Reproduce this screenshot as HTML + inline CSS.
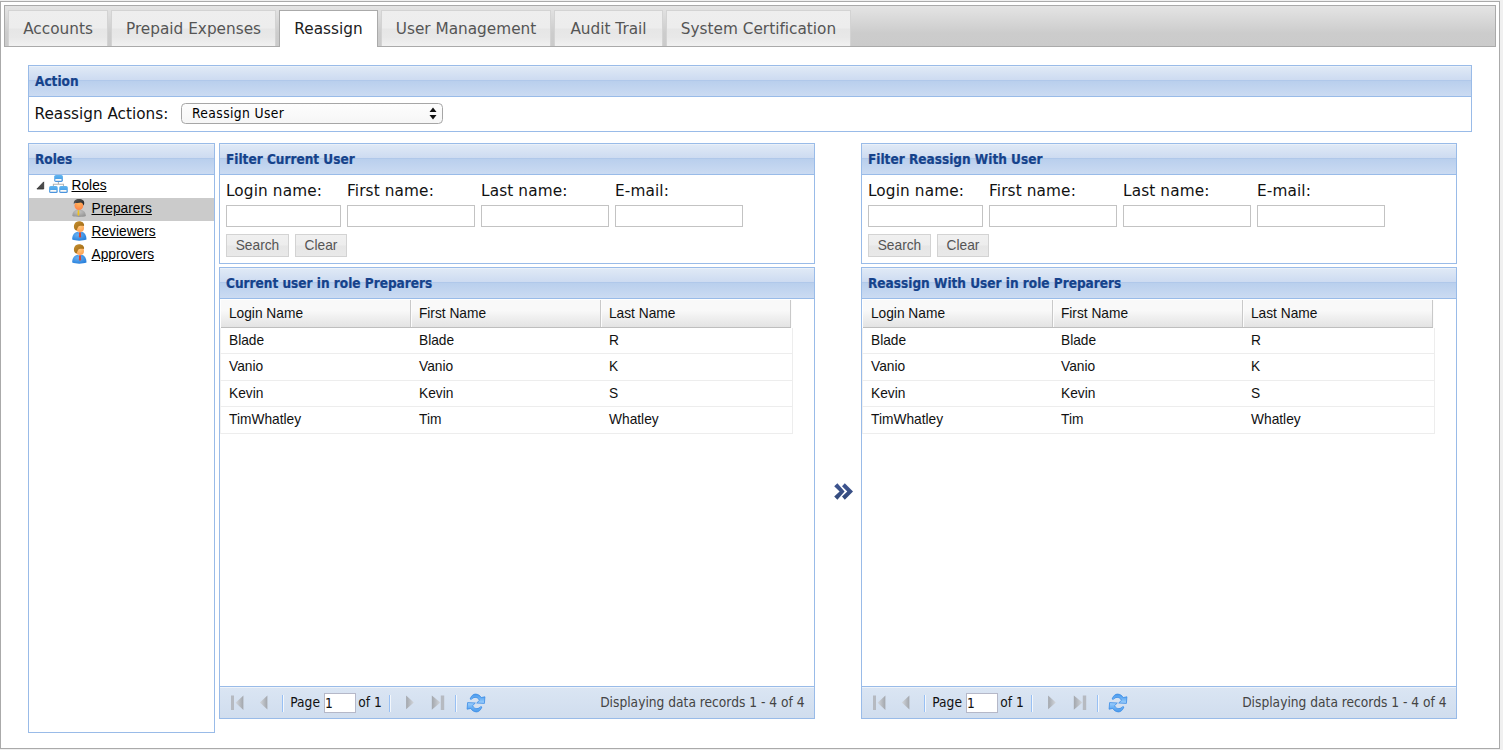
<!DOCTYPE html>
<html><head><meta charset="utf-8"><title>Reassign</title>
<style>
html,body{margin:0;padding:0}
body{font-variant-ligatures:none;width:1503px;height:750px;overflow:hidden;background:#f0f0f0;position:relative;font-family:"DejaVu Sans","Liberation Sans",sans-serif;font-size:15px;color:#222}
div,span,input,button,select{box-sizing:border-box}
input,button,select{margin:0;padding:0;outline:0;border-radius:0;-webkit-appearance:none;appearance:none}
#outer{position:absolute;left:0;top:1px;width:1500px;height:748px;border:1px solid #aaa;background:#fff}
#nav{position:absolute;left:4px;top:5px;width:1492px;height:42px;border:1px solid #aaa;background:linear-gradient(to bottom,#e4e4e4 0,#cccccc 68%,#cbcbcb 100%)}
.tab{position:absolute;top:10px;height:36px;border:1px solid #d3d3d3;border-bottom:0;background:linear-gradient(to bottom,#eeeeee 0,#ededed 47%,#e6e6e6 53%,#e8e8e8 75%,#f1f1f1 100%);color:#555;text-align:center;font-size:15.3px;line-height:18px;padding-top:9px;white-space:nowrap}
.tab.act{height:37px;background:#fff;border-color:#aaa;color:#212121}
.xp{position:absolute;border:1px solid #99bbe8;background:#fff}
.xh{position:absolute;left:0;top:0;right:0;height:31px;border-bottom:1px solid #99bbe8;background:linear-gradient(to bottom,#eaf0f8 0,#eaf0f8 1px,#dfe9f6 1px,#cddbf1 14px,#b0c8ea 14px,#b0c8ea 15px,#b9cfed 15px,#cbdbf2 30px)}
.xt{position:absolute;left:6px;top:6.1px;-webkit-text-stroke:.2px #15428b;font-family:"DejaVu Sans Condensed","DejaVu Sans","Liberation Sans",sans-serif;font-stretch:condensed;font-weight:bold;font-size:13.5px;line-height:18px;color:#15428b;white-space:nowrap}
.lab{position:absolute;top:37px;font-size:15.3px;letter-spacing:.12px;line-height:20px;color:#111;white-space:nowrap}
.inp{position:absolute;top:61px;height:22px;border:1px solid #c3c3c3;background:#fff}
.btn{position:absolute;top:90px;height:23px;border:1px solid #d3d3d3;background:linear-gradient(to bottom,#f0f0f0 0,#ededed 48%,#e6e6e6 52%,#e9e9e9 100%);color:#555;font-family:"Liberation Sans",sans-serif;font-size:13.75px;line-height:21px;text-align:center}
.gh{position:absolute;left:1px;top:32px;width:570px;height:28px;background:linear-gradient(to bottom,#f9f9f9 0,#f9f9f9 38%,#e3e3e3 100%);border-bottom:1px solid #bebebe}
.gc{position:absolute;top:0;width:191px;height:27px;border-right:1px solid #c9c9c9;box-shadow:1px 0 0 #fcfcfc;font-family:"Liberation Sans",sans-serif;font-size:13.75px;line-height:27px;color:#111}
.gc span{position:absolute;left:8.9px;top:.3px}
.row{position:absolute;left:0;width:573px;height:26.25px;border-bottom:1px solid #ededed;border-right:1px solid #ededed;border-left:1px solid #f2f2f2;font-family:"Liberation Sans",sans-serif;font-size:13.75px;line-height:25px;color:#111}
.row span{position:absolute;top:.3px;white-space:nowrap}
.tb{position:absolute;left:0;right:0;bottom:0;height:32px;border-top:1px solid #99bbe8;background:linear-gradient(to bottom,#eef3fa 0,#eef3fa 1px,#dae5f3 1px,#d0ddee 100%)}
.ic{position:absolute}
.sep{position:absolute;top:8px;width:2px;height:17px;border-left:1px solid #98c0f4;border-right:1px solid #f3f7fc}
.tt{position:absolute;top:6px;font-family:"DejaVu Sans Condensed","DejaVu Sans",sans-serif;font-stretch:condensed;font-size:13.65px;line-height:18px;color:#111;white-space:nowrap}
.tt.info{right:9.5px;color:#444}
.pin{position:absolute;left:104px;top:6px;width:32px;height:20px;border:1px solid #b5b8c8;background:#fff;font-family:"DejaVu Sans Condensed","DejaVu Sans",sans-serif;font-stretch:condensed;font-size:13.65px;line-height:17px;color:#111}
.pin span{position:absolute;left:0;top:1.2px}
.node{position:absolute;left:0;width:185px;height:23px;font-family:"Liberation Sans",sans-serif;font-size:13.75px;line-height:22px;color:#000;white-space:nowrap}
.node span{position:absolute;top:0;text-decoration:underline}
.node.sel{background:#cbcbcb}
#sel{position:absolute;left:152px;top:37px;width:262px;height:21px;border:1px solid #a6a6a6;border-radius:4.5px;background:linear-gradient(#fdfdfd,#f6f6f6);font-family:"DejaVu Sans Condensed","DejaVu Sans",sans-serif;font-stretch:condensed;font-size:13.75px;letter-spacing:.38px;line-height:18px;color:#000;padding:0 0 2px 10px;border-radius:4.5px}

</style></head><body>
<div id="outer"></div>
<div id="nav"></div>
<div class="tab" style="left:8px;width:100px"><span>Accounts</span></div>
<div class="tab" style="left:111px;width:165px"><span>Prepaid Expenses</span></div>
<div class="tab act" style="left:279px;width:99px"><span>Reassign</span></div>
<div class="tab" style="left:381px;width:170px"><span>User Management</span></div>
<div class="tab" style="left:554px;width:109px"><span>Audit Trail</span></div>
<div class="tab" style="left:666px;width:185px"><span>System Certification</span></div>

<div class="xp" style="left:28px;top:65px;width:1444px;height:67px">
  <div class="xh"><span class="xt">Action</span></div>
  <div class="lab" style="left:5.5px;top:37.5px;font-size:15.25px;letter-spacing:0">Reassign Actions:</div>
  <select id="sel"><option selected>Reassign User</option><option>Reassign Role</option></select>
  <svg width="8" height="13" viewBox="0 0 8 13" style="position:absolute;left:399.6px;top:41px;pointer-events:none"><path d="M4 0.5 L7.5 5 L0.5 5 Z M0.5 8 L7.5 8 L4 12.5 Z" fill="#111"/></svg>
</div>

<div class="xp" style="left:28px;top:143px;width:187px;height:590px">
  <div class="xh"><span class="xt">Roles</span></div>
  <div class="node" style="top:31px"><svg style="position:absolute;left:7px;top:5.8px" width="9" height="9" viewBox="36 181.5 9 9"><path d="M43.7 182.4 V189.5 H36.9 Z" fill="#4a4a4a" stroke="#2e2e2e" stroke-width=".8" stroke-linejoin="round"/></svg><svg style="position:absolute;left:19px;top:-1px" width="20" height="20" viewBox="48 174 20 20">
<defs><linearGradient id="bx" x1="0" y1="0" x2="0" y2="1"><stop offset="0" stop-color="#62b4ee"/><stop offset=".45" stop-color="#4fa6ea"/><stop offset="1" stop-color="#4b90da"/></linearGradient></defs>
<path d="M58.4 181.5 V184.2 M53.4 186.5 V184.2 H63.5 V186.5" fill="none" stroke="#b3b3b3" stroke-width="1.1"/>
<rect x="54.2" y="175" width="8.7" height="6.9" rx="1.6" fill="url(#bx)"/><rect x="55.3" y="179.1" width="6.2" height="1.7" rx=".4" fill="#fdfaf6"/>
<rect x="49.1" y="186.1" width="8.6" height="7" rx="1.6" fill="url(#bx)"/><rect x="50.2" y="190.1" width="6.2" height="1.7" rx=".4" fill="#fdfaf6"/>
<rect x="59.2" y="186.1" width="8.6" height="7" rx="1.6" fill="url(#bx)"/><rect x="60.3" y="190.1" width="6.2" height="1.7" rx=".4" fill="#fdfaf6"/>
</svg><span style="left:42.5px">Roles</span></div>
  <div class="node sel" style="top:54px"><svg style="position:absolute;left:42px;top:0" width="17" height="21" viewBox="71 198 17 21">
<defs><linearGradient id="hr1" x1="0" y1="0" x2="1" y2="1"><stop offset="0" stop-color="#5e5e5e"/><stop offset="1" stop-color="#1c1c1c"/></linearGradient>
<radialGradient id="bd1" cx=".45" cy=".3" r=".8"><stop offset="0" stop-color="#c4c4c4"/><stop offset="1" stop-color="#8f8f8f"/></radialGradient>
<radialGradient id="fc1" cx=".5" cy=".3" r=".7"><stop offset="0" stop-color="#ffb45a"/><stop offset="1" stop-color="#ff8248"/></radialGradient></defs>
<path d="M72.3 216 C72.4 212.6 73.8 210.6 77 209.6 L78.6 210.6 L80.6 209.6 C84.2 210.4 85.8 212.8 85.9 216 C82.5 217.2 76 217.2 72.3 216 Z" fill="url(#bd1)"/>
<ellipse cx="78.9" cy="205.6" rx="4.4" ry="4.5" fill="url(#fc1)"/>
<path d="M77.7 210.2 L79.2 210.2 L79.4 214.8 L78.4 216 L77.5 214.8 Z" fill="#f0c01c"/>
<path d="M73.9 204.2 C73.2 200.6 76 198.9 79 199 C82.4 199 84.6 200.8 84.2 203.4 C84.1 204.4 83.8 205.2 83.4 205.6 C83.2 204 82.4 203 81 202.6 C79 203.2 76.4 203.2 74.9 202.8 C74.5 203.4 74.2 204 73.9 204.2 Z" fill="url(#hr1)"/>
</svg><span style="left:62.5px">Preparers</span></div>
  <div class="node" style="top:77px"><svg style="position:absolute;left:42px;top:0" width="17" height="21" viewBox="71 198 17 21">
<defs><linearGradient id="hr2" x1="0" y1="0" x2="1" y2="1"><stop offset="0" stop-color="#c69030"/><stop offset="1" stop-color="#996210"/></linearGradient>
<radialGradient id="bd2" cx=".4" cy=".35" r=".8"><stop offset="0" stop-color="#6ab2f2"/><stop offset="1" stop-color="#1d78d8"/></radialGradient>
<radialGradient id="fc2" cx=".45" cy=".3" r=".8"><stop offset="0" stop-color="#ffca7c"/><stop offset="1" stop-color="#ff9a4e"/></radialGradient></defs>
<path d="M72.2 216.6 C72.2 212.6 73.8 209.8 77.4 208.8 L79.8 209.8 L82 208.8 C85 209.8 86.5 212.6 86.5 216.6 C82.5 218 76 218 72.2 216.6 Z" fill="url(#bd2)"/>
<ellipse cx="80" cy="205" rx="4" ry="4.1" fill="url(#fc2)"/>
<path d="M79.1 209.2 L80.9 209.2 L81.1 213.8 L80 215 L78.9 213.8 Z" fill="#d2463a"/>
<path d="M74.8 206.6 C72.6 202.6 74.8 198.2 79 198.2 C82.6 198.2 84.6 200.4 84 203 C82.4 202.6 80.4 202.6 78.6 203.2 C77.6 204.4 77.2 205.6 76.8 207.6 C76 207.4 75.2 207.2 74.8 206.6 Z" fill="url(#hr2)"/>
</svg><span style="left:62.5px">Reviewers</span></div>
  <div class="node" style="top:100px"><svg style="position:absolute;left:42px;top:0" width="17" height="21" viewBox="71 198 17 21">
<defs><linearGradient id="hr3" x1="0" y1="0" x2="1" y2="1"><stop offset="0" stop-color="#c69030"/><stop offset="1" stop-color="#996210"/></linearGradient>
<radialGradient id="bd3" cx=".4" cy=".35" r=".8"><stop offset="0" stop-color="#6ab2f2"/><stop offset="1" stop-color="#1d78d8"/></radialGradient>
<radialGradient id="fc3" cx=".45" cy=".3" r=".8"><stop offset="0" stop-color="#ffca7c"/><stop offset="1" stop-color="#ff9a4e"/></radialGradient></defs>
<path d="M72.2 216.6 C72.2 212.6 73.8 209.8 77.4 208.8 L79.8 209.8 L82 208.8 C85 209.8 86.5 212.6 86.5 216.6 C82.5 218 76 218 72.2 216.6 Z" fill="url(#bd3)"/>
<ellipse cx="80" cy="205" rx="4" ry="4.1" fill="url(#fc3)"/>
<path d="M79.1 209.2 L80.9 209.2 L81.1 213.8 L80 215 L78.9 213.8 Z" fill="#d2463a"/>
<path d="M74.8 206.6 C72.6 202.6 74.8 198.2 79 198.2 C82.6 198.2 84.6 200.4 84 203 C82.4 202.6 80.4 202.6 78.6 203.2 C77.6 204.4 77.2 205.6 76.8 207.6 C76 207.4 75.2 207.2 74.8 206.6 Z" fill="url(#hr3)"/>
</svg><span style="left:62.5px">Approvers</span></div>
</div>

<div class="xp" style="left:219px;top:143px;width:596px;height:121px">
  <div class="xh"><span class="xt">Filter Current User</span></div>
  <div class="lab" style="left:6px">Login name:</div>
  <div class="lab" style="left:127px">First name:</div>
  <div class="lab" style="left:261px">Last name:</div>
  <div class="lab" style="left:395px">E-mail:</div>
  <input class="inp" type="text" style="left:6px;width:115px">
  <input class="inp" type="text" style="left:127px;width:128px">
  <input class="inp" type="text" style="left:261px;width:128px">
  <input class="inp" type="text" style="left:395px;width:128px">
  <button class="btn" type="button" style="left:6px;width:63px">Search</button>
  <button class="btn" type="button" style="left:75px;width:52px">Clear</button>
</div>

<div class="xp" style="left:219px;top:267px;width:596px;height:452px">
  <div class="xh"><span class="xt">Current user in role Preparers</span></div>
  <div class="gh">
    <div class="gc" style="left:-1px"><span>Login Name</span></div>
    <div class="gc" style="left:189px"><span>First Name</span></div>
    <div class="gc" style="left:379px"><span>Last Name</span></div>
  </div>
  <div class="row" style="top:60px;height:26px"><span style="left:8px">Blade</span><span style="left:198px">Blade</span><span style="left:388px">R</span></div>
<div class="row" style="top:86px;height:27px"><span style="left:8px">Vanio</span><span style="left:198px">Vanio</span><span style="left:388px">K</span></div>
<div class="row" style="top:113px;height:26px"><span style="left:8px">Kevin</span><span style="left:198px">Kevin</span><span style="left:388px">S</span></div>
<div class="row" style="top:139px;height:27px"><span style="left:8px">TimWhatley</span><span style="left:198px">Tim</span><span style="left:388px">Whatley</span></div>

  <div class="tb">
    <svg class="ic" style="left:10px;top:8px" width="15" height="16" viewBox="0 0 15 16"><defs><linearGradient id="tg219" x1="0" y1="0" x2="1" y2="0"><stop offset="0" stop-color="#d2d6dc"/><stop offset="1" stop-color="#a2a6ac"/></linearGradient><linearGradient id="tgb219" x1="1" y1="0" x2="0" y2="0"><stop offset="0" stop-color="#d2d6dc"/><stop offset="1" stop-color="#a2a6ac"/></linearGradient></defs><rect x="1" y=".5" width="3" height="14.5" fill="#b6bac1"/><path d="M13.4 .5 L5.6 7.7 L13.4 15 Z" fill="url(#tg219)"/></svg>
    <svg class="ic" style="left:39px;top:8px" width="10" height="16" viewBox="0 0 10 16"><path d="M8.4 .5 L.8 7.6 L8.4 14.6 Z" fill="url(#tg219)"/></svg>
    <div class="sep" style="left:62px"></div>
    <span class="tt" style="left:70.3px">Page</span>
    <input class="pin" type="text" value="1">
    <span class="tt" style="left:138.3px">of 1</span>
    <div class="sep" style="left:169px"></div>
    <svg class="ic" style="left:185px;top:8px" width="10" height="16" viewBox="0 0 10 16"><path d="M1.1 .5 L8.9 7.4 L1.1 14.2 Z" fill="url(#tgb219)"/></svg>
    <svg class="ic" style="left:211px;top:8px" width="15" height="16" viewBox="0 0 15 16"><path d="M.8 .5 L9.4 7.6 L.8 14.8 Z" fill="url(#tgb219)"/><rect x="9.8" y=".5" width="3.4" height="14.5" fill="#b6bac1"/></svg>
    <div class="sep" style="left:235px"></div>
    <svg class="ic" style="left:245.85px;top:5.85px" width="20" height="20" viewBox="-10 -10 20 20">
      <defs><linearGradient id="rfG219" x1="0" y1="0" x2="0" y2="1"><stop offset="0" stop-color="#4a9aec"/><stop offset=".5" stop-color="#6db2f5"/><stop offset="1" stop-color="#a4d2fc"/></linearGradient></defs>
      <path d="M-5.9 -4 C-4.6 -7.4 -2.6 -8.9 -0.6 -8.9 C2 -8.9 4 -7.5 5.2 -5.4 L8.9 -6.2 L8.4 0.4 L0.7 0 L3.5 -2.7 C2.6 -4.6 1 -5.6 -0.8 -5.6 C-2.4 -5.6 -3.8 -4.8 -4.7 -3.6 Z" fill="url(#rfG219)" stroke="#3a8ce6" stroke-width=".8" stroke-linejoin="round"/>
      <path d="M-5.9 -4 C-4.6 -7.4 -2.6 -8.9 -0.6 -8.9 C2 -8.9 4 -7.5 5.2 -5.4 L8.9 -6.2 L8.4 0.4 L0.7 0 L3.5 -2.7 C2.6 -4.6 1 -5.6 -0.8 -5.6 C-2.4 -5.6 -3.8 -4.8 -4.7 -3.6 Z" transform="rotate(180)" fill="url(#rfG219)" stroke="#3a8ce6" stroke-width=".8" stroke-linejoin="round"/>
    </svg>
    <span class="tt info">Displaying data records 1 - 4 of 4</span>
  </div>
</div>

<div class="xp" style="left:861px;top:143px;width:596px;height:121px">
  <div class="xh"><span class="xt">Filter Reassign With User</span></div>
  <div class="lab" style="left:6px">Login name:</div>
  <div class="lab" style="left:127px">First name:</div>
  <div class="lab" style="left:261px">Last name:</div>
  <div class="lab" style="left:395px">E-mail:</div>
  <input class="inp" type="text" style="left:6px;width:115px">
  <input class="inp" type="text" style="left:127px;width:128px">
  <input class="inp" type="text" style="left:261px;width:128px">
  <input class="inp" type="text" style="left:395px;width:128px">
  <button class="btn" type="button" style="left:6px;width:63px">Search</button>
  <button class="btn" type="button" style="left:75px;width:52px">Clear</button>
</div>

<div class="xp" style="left:861px;top:267px;width:596px;height:452px">
  <div class="xh"><span class="xt">Reassign With User in role Preparers</span></div>
  <div class="gh">
    <div class="gc" style="left:-1px"><span>Login Name</span></div>
    <div class="gc" style="left:189px"><span>First Name</span></div>
    <div class="gc" style="left:379px"><span>Last Name</span></div>
  </div>
  <div class="row" style="top:60px;height:26px"><span style="left:8px">Blade</span><span style="left:198px">Blade</span><span style="left:388px">R</span></div>
<div class="row" style="top:86px;height:27px"><span style="left:8px">Vanio</span><span style="left:198px">Vanio</span><span style="left:388px">K</span></div>
<div class="row" style="top:113px;height:26px"><span style="left:8px">Kevin</span><span style="left:198px">Kevin</span><span style="left:388px">S</span></div>
<div class="row" style="top:139px;height:27px"><span style="left:8px">TimWhatley</span><span style="left:198px">Tim</span><span style="left:388px">Whatley</span></div>

  <div class="tb">
    <svg class="ic" style="left:10px;top:8px" width="15" height="16" viewBox="0 0 15 16"><defs><linearGradient id="tg861" x1="0" y1="0" x2="1" y2="0"><stop offset="0" stop-color="#d2d6dc"/><stop offset="1" stop-color="#a2a6ac"/></linearGradient><linearGradient id="tgb861" x1="1" y1="0" x2="0" y2="0"><stop offset="0" stop-color="#d2d6dc"/><stop offset="1" stop-color="#a2a6ac"/></linearGradient></defs><rect x="1" y=".5" width="3" height="14.5" fill="#b6bac1"/><path d="M13.4 .5 L5.6 7.7 L13.4 15 Z" fill="url(#tg861)"/></svg>
    <svg class="ic" style="left:39px;top:8px" width="10" height="16" viewBox="0 0 10 16"><path d="M8.4 .5 L.8 7.6 L8.4 14.6 Z" fill="url(#tg861)"/></svg>
    <div class="sep" style="left:62px"></div>
    <span class="tt" style="left:70.3px">Page</span>
    <input class="pin" type="text" value="1">
    <span class="tt" style="left:138.3px">of 1</span>
    <div class="sep" style="left:169px"></div>
    <svg class="ic" style="left:185px;top:8px" width="10" height="16" viewBox="0 0 10 16"><path d="M1.1 .5 L8.9 7.4 L1.1 14.2 Z" fill="url(#tgb861)"/></svg>
    <svg class="ic" style="left:211px;top:8px" width="15" height="16" viewBox="0 0 15 16"><path d="M.8 .5 L9.4 7.6 L.8 14.8 Z" fill="url(#tgb861)"/><rect x="9.8" y=".5" width="3.4" height="14.5" fill="#b6bac1"/></svg>
    <div class="sep" style="left:235px"></div>
    <svg class="ic" style="left:245.85px;top:5.85px" width="20" height="20" viewBox="-10 -10 20 20">
      <defs><linearGradient id="rfG861" x1="0" y1="0" x2="0" y2="1"><stop offset="0" stop-color="#4a9aec"/><stop offset=".5" stop-color="#6db2f5"/><stop offset="1" stop-color="#a4d2fc"/></linearGradient></defs>
      <path d="M-5.9 -4 C-4.6 -7.4 -2.6 -8.9 -0.6 -8.9 C2 -8.9 4 -7.5 5.2 -5.4 L8.9 -6.2 L8.4 0.4 L0.7 0 L3.5 -2.7 C2.6 -4.6 1 -5.6 -0.8 -5.6 C-2.4 -5.6 -3.8 -4.8 -4.7 -3.6 Z" fill="url(#rfG861)" stroke="#3a8ce6" stroke-width=".8" stroke-linejoin="round"/>
      <path d="M-5.9 -4 C-4.6 -7.4 -2.6 -8.9 -0.6 -8.9 C2 -8.9 4 -7.5 5.2 -5.4 L8.9 -6.2 L8.4 0.4 L0.7 0 L3.5 -2.7 C2.6 -4.6 1 -5.6 -0.8 -5.6 C-2.4 -5.6 -3.8 -4.8 -4.7 -3.6 Z" transform="rotate(180)" fill="url(#rfG861)" stroke="#3a8ce6" stroke-width=".8" stroke-linejoin="round"/>
    </svg>
    <span class="tt info">Displaying data records 1 - 4 of 4</span>
  </div>
</div>
<svg style="position:absolute;left:833px;top:482px" width="22" height="19" viewBox="833 482 22 19"><defs><linearGradient id="chv" x1="0" y1="0" x2="0" y2="1"><stop offset="0" stop-color="#3e5592"/><stop offset="1" stop-color="#334a7a"/></linearGradient></defs><path d="M834.2 486.3 L837.4 483.2 L844.6 491.4 L837.4 499.7 L834.2 496.6 L839.6 491.4 Z M842 486.3 L844.8 483.2 L853 491.4 L844.8 499.7 L842 496.6 L847.3 491.4 Z" fill="url(#chv)"/></svg>
</body></html>
